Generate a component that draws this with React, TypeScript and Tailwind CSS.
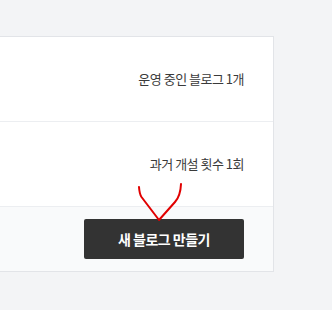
// 블로그 관리 카드
export default function App() {
  return (
    <div className="relative h-[310px] w-[332px] bg-[#f3f4f6] pt-[36px]" style={{ fontFamily: '"Noto Sans CJK KR", "Noto Sans", sans-serif' }}>
      <div className="w-[274px] border border-l-0 border-[#e2e4e8] bg-white">
        <div className="flex h-[85px] items-center justify-end border-b border-[#eceef1] pr-[29px]">
          <span className="text-[13px] tracking-[-0.5px] text-[#3a3a3a]">운영 중인 블로그 1개</span>
        </div>
        <div className="flex h-[85px] items-center justify-end border-b border-[#eceef1] pr-[29px]">
          <span className="text-[13px] tracking-[-0.5px] text-[#3a3a3a]">과거 개설 횟수 1회</span>
        </div>
        <div className="flex h-[64px] items-center justify-end bg-[#f9fafb] pr-[29px]">
          <button className="h-[40px] w-[160px] rounded-[2px] bg-[#333] text-[14px] font-bold tracking-[-0.5px] text-white">
            새 블로그 만들기
          </button>
        </div>
      </div>
      <svg className="pointer-events-none absolute left-0 top-0" width="332" height="310" viewBox="0 0 332 310">
        <path
          d="M139 187 Q139.5 194 141.5 197 L159 220 L175 202 Q180.5 196 181 184"
          fill="none"
          stroke="#e10000"
          strokeWidth="2"
          strokeLinecap="round"
          strokeLinejoin="round"
        />
      </svg>
    </div>
  );
}
